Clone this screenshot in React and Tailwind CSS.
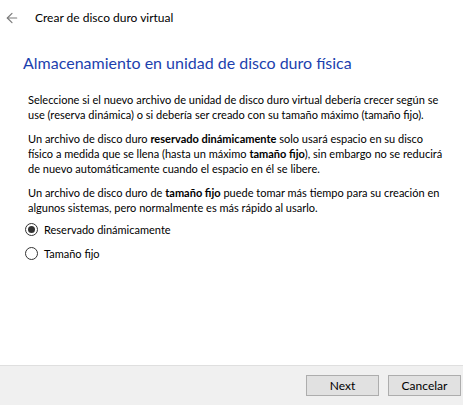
import React, { useState } from "react";
import { ArrowLeft } from "lucide-react";

function Radio({ checked, label, onClick }) {
  return (
    <button onClick={onClick} className="flex items-center gap-[6px] h-[15px] text-left">
      <span className="w-[13px] h-[13px] rounded-full border border-[#333] bg-white flex items-center justify-center">
        {checked && <span className="w-[7px] h-[7px] rounded-full bg-[#333]" />}
      </span>
      <span>{label}</span>
    </button>
  );
}

export default function App() {
  const [mode, setMode] = useState("dyn");

  return (
    <div
      className="w-[463px] h-[405px] flex flex-col bg-white text-black text-[11px] leading-[15px]"
      style={{ fontFamily: '"Segoe UI", Lato, "Noto Sans", sans-serif' }}
    >
      {/* Header */}
      <div className="flex items-center pt-[10px] h-[25px] text-[12px]">
        <ArrowLeft className="w-[16px] h-[16px] ml-[4px] text-[#7a7a7a]" strokeWidth={1.75} />
        <span className="ml-[15px]">Crear de disco duro virtual</span>
      </div>

      <div className="flex-1 flex flex-col">
        <h1 className="mt-[27px] ml-[23px] text-[16px] leading-[21px] text-[#1c3fae]">
          Almacenamiento en unidad de disco duro física
        </h1>

        <div className="mt-[19px] ml-[28px] mr-[20px] whitespace-nowrap">
          <p className="mb-[9px]">
            Seleccione si el nuevo archivo de unidad de disco duro virtual debería crecer según se
            <br />
            use (reserva dinámica) o si debería ser creado con su tamaño máximo (tamaño fijo).
          </p>
          <p className="mb-[9px]">
            Un archivo de disco duro <b>reservado dinámicamente</b> solo usará espacio en su disco
            <br />
            físico a medida que se llena (hasta un máximo <b>tamaño fijo</b>), sin embargo no se reducirá
            <br />
            de nuevo automáticamente cuando el espacio en él se libere.
          </p>
          <p>
            Un archivo de disco duro de <b>tamaño fijo</b> puede tomar más tiempo para su creación en
            <br />
            algunos sistemas, pero normalmente es más rápido al usarlo.
          </p>
        </div>

        <div className="mt-[7px] ml-[25px] flex flex-col gap-[9px]">
          <Radio checked={mode === "dyn"} label="Reservado dinámicamente" onClick={() => setMode("dyn")} />
          <Radio checked={mode === "fix"} label="Tamaño fijo" onClick={() => setMode("fix")} />
        </div>
      </div>

      {/* Footer */}
      <div className="h-[40px] bg-[#f0f0f0] border-t border-[#dfdfdf] flex justify-end items-start pt-[9px] pr-[2px] gap-[9px] text-[12px]">
        <button className="w-[73px] h-[21px] bg-[#e1e1e1] border border-[#adadad]">Next</button>
        <button className="w-[73px] h-[21px] bg-[#e1e1e1] border border-[#adadad]">Cancelar</button>
      </div>
    </div>
  );
}
